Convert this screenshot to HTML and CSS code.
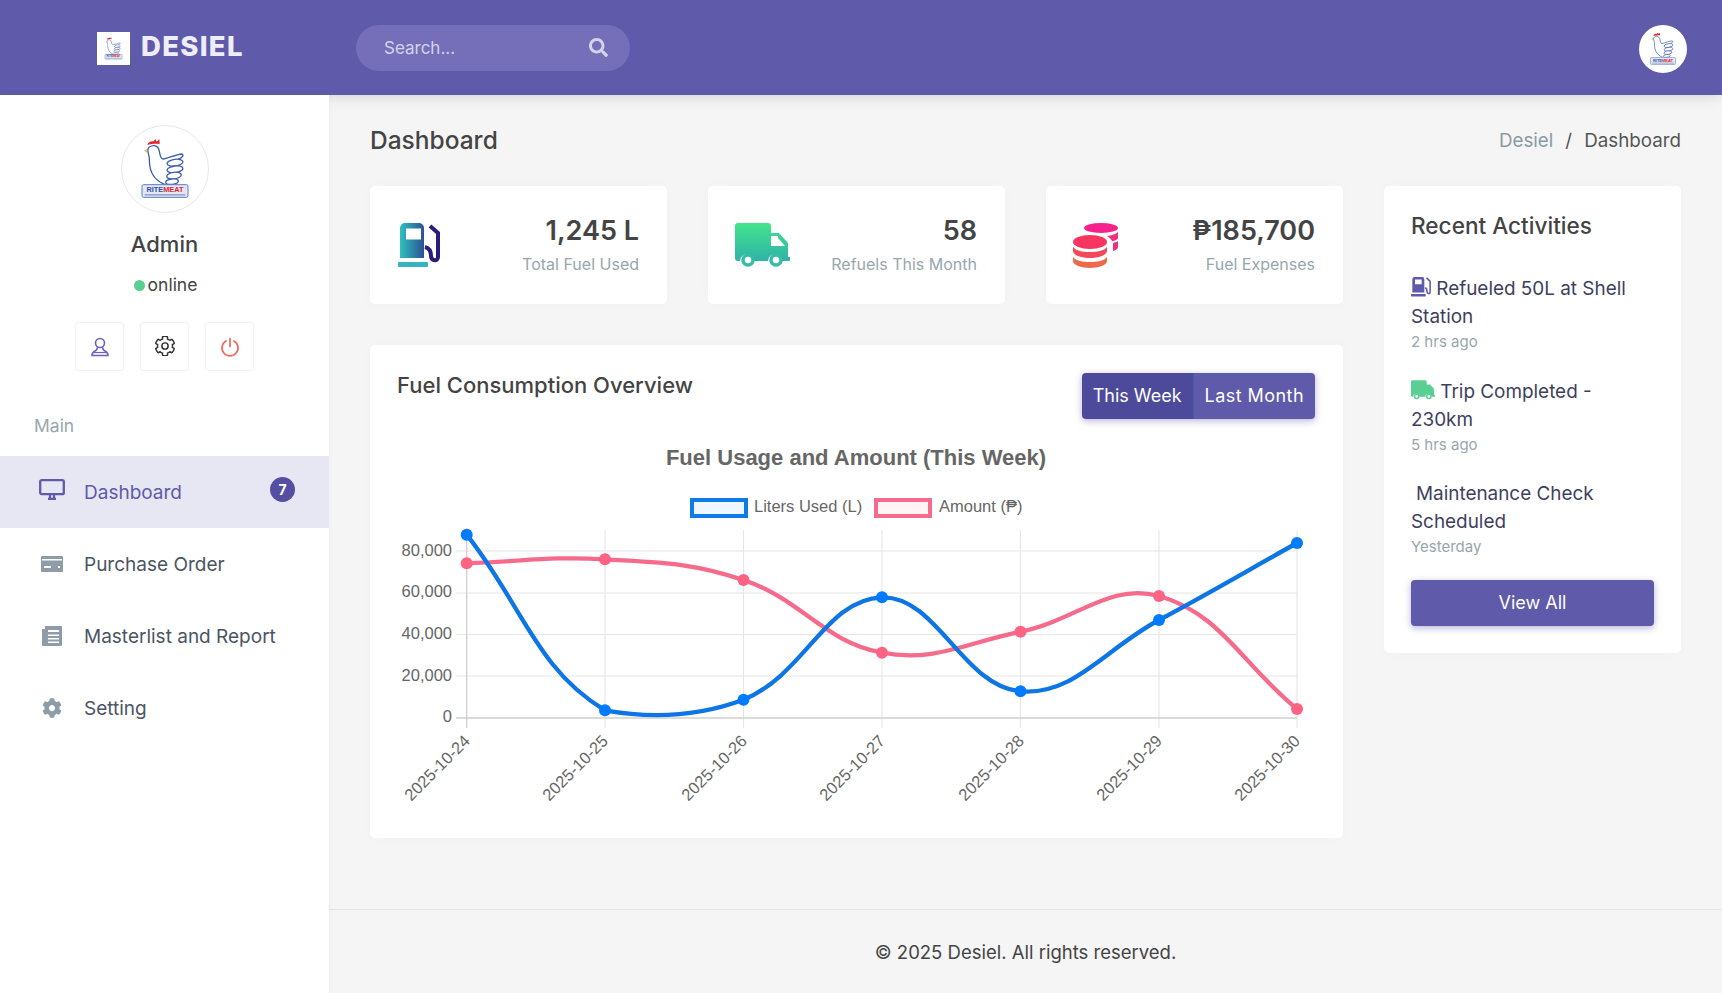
FILE: index.html
```html
<!DOCTYPE html>
<html lang="en">
<head>
    <meta charset="UTF-8">
    <title>Desiel - Dashboard</title>
    <link rel="stylesheet" href="styles.css">
</head>
<body>
    <!-- shared icons -->
    <svg class="defs" width="0" height="0">
        <defs>
            <linearGradient id="gradPump" x1="0" y1="0" x2="1.500" y2="0">
                <stop offset="0" stop-color="#2fc0bf"/>
                <stop offset="1" stop-color="#2c1a7c"/>
            </linearGradient>
            <linearGradient id="gradTruck" x1="0" y1="0" x2="0" y2="1">
                <stop offset="0" stop-color="#43e48c"/>
                <stop offset="1" stop-color="#2fb2a8"/>
            </linearGradient>
            <symbol id="ritemeat" viewBox="33 33 264 264">
                <path d="M112 93c3-10 12-13 19-11l5-7 4 8 8-8 1 15c-13-2-26 0-37 3z" fill="#e1262c"/>
                <path d="M110 104l-8 6 9 6z" fill="#f2b632"/>
                <path d="M118 99c-11 8 0 20 0 36 0 30 7 60 47 77M118 99c12-8 27-5 30 13 2 13 4 23 12 23 20-5 40-13 55-15 8 2 3 12-10 15" fill="none" stroke="#3f5fae" stroke-width="4"/>
                <g fill="#fff" stroke="#3f5fae" stroke-width="4">
                    <ellipse cx="195" cy="146" rx="24" ry="10" transform="rotate(-8 195 146)"/>
                    <ellipse cx="195" cy="166" rx="24" ry="10" transform="rotate(-8 195 166)"/>
                    <ellipse cx="192" cy="185" rx="22" ry="10" transform="rotate(-8 192 185)"/>
                    <ellipse cx="186" cy="203" rx="19" ry="8" transform="rotate(-8 186 203)"/>
                </g>
                <rect x="96" y="212" width="138" height="38" rx="5" fill="#e2e7f3" stroke="#5f7cc0" stroke-width="3"/>
                <text x="165" y="235" text-anchor="middle" class="logoText"><tspan fill="#2f4fa8">RITE</tspan><tspan fill="#e1262c">MEAT</tspan></text>
                <rect x="104" y="240" width="122" height="5" fill="#9aa8cc"/>
            </symbol>
            <symbol id="pump" viewBox="0 0 45 45">
                <path d="M3 5a5 5 0 0 1 5-5h14a5 5 0 0 1 5 5v30H3zM9 5.500v11h15v-11z" fill="url(#gradPump)" fill-rule="evenodd"/>
                <rect x="1" y="39" width="30" height="5" rx="1" fill="#35b4c0"/>
                <path d="M33 3l8 7v24c0 5-7 4-7-1 0-5-2-8-6-9" fill="none" stroke="#2c1a7c" stroke-width="4"/>
            </symbol>
            <symbol id="truck" viewBox="0 0 55 45">
                <path d="M3 0h30a3 3 0 0 1 3 3v7h8l9 10v14h2v4h-8a7 7 0 0 0-14 0H19a7 7 0 0 0-14 0H3a3 3 0 0 1-3-3V3a3 3 0 0 1 3-3zM36 13v10h14l-7-8v-2z" fill="url(#gradTruck)" fill-rule="evenodd"/>
                <circle cx="13" cy="37" r="5" fill="#fff" stroke="#35bea6" stroke-width="3.500"/>
                <circle cx="41" cy="37" r="5" fill="#fff" stroke="#35bea6" stroke-width="3.500"/>
            </symbol>
            <symbol id="coins" viewBox="0 0 45 45">
                <ellipse cx="28" cy="5" rx="17" ry="5" fill="#f7208d"/>
                <path d="M34 13c5-.5 9-2 11-4v6c0 1-3 3-6 3-1-2-3-4-5-5zM40 20c2-.5 4-1 5-2v6c0 2-2 3-5 4z" fill="#f02f80"/>
                <ellipse cx="17" cy="19" rx="17" ry="7" fill="#f7355f"/>
                <path d="M0 24c3 4 10 5 17 5s14-1 17-5v4c0 4-8 7-17 7S0 32 0 28z" fill="#f3495b"/>
                <path d="M0 34c3 4 10 5 17 5s14-1 17-5v4c0 4-8 7-17 7S0 42 0 38z" fill="#ee6b4a"/>
            </symbol>
            <symbol id="cog" viewBox="0 0 512 512">
                <path d="M487.4 315.7l-42.6-24.6c4.3-23.2 4.3-47 0-70.2l42.6-24.6c4.900-2.800 7.100-8.600 5.500-14-11.100-35.600-30-67.800-54.700-94.600-3.800-4.100-10-5.100-14.800-2.300L380.800 110c-17.900-15.400-38.500-27.300-60.800-35.100V25.800c0-5.600-3.900-10.500-9.400-11.700-36.700-8.200-74.300-7.800-109.200 0-5.500 1.200-9.400 6.100-9.400 11.700V75c-22.200 7.900-42.800 19.800-60.800 35.100L88.700 85.500c-4.900-2.800-11-1.900-14.800 2.300-24.700 26.700-43.600 58.900-54.700 94.600-1.700 5.400.6 11.200 5.500 14L67.300 221c-4.300 23.200-4.300 47 0 70.200l-42.600 24.600c-4.900 2.800-7.100 8.600-5.500 14 11.100 35.600 30 67.800 54.700 94.600 3.800 4.100 10 5.100 14.800 2.300l42.600-24.600c17.900 15.400 38.500 27.300 60.800 35.100v49.200c0 5.600 3.900 10.500 9.400 11.700 36.700 8.200 74.300 7.800 109.200 0 5.500-1.200 9.400-6.100 9.400-11.700v-49.200c22.200-7.900 42.800-19.800 60.800-35.100l42.600 24.600c4.900 2.800 11 1.900 14.800-2.300 24.700-26.700 43.600-58.900 54.700-94.600 1.500-5.500-.7-11.300-5.600-14.100zM256 336c-44.100 0-80-35.900-80-80s35.900-80 80-80 80 35.900 80 80-35.900 80-80 80z"/>
            </symbol>
        </defs>
    </svg>

    <header class="topbar">
        <div class="brand">
            <span class="brandLogo"><svg width="33" height="33"><use href="#ritemeat"/></svg></span>
            <span class="brandName">DESIEL</span>
        </div>
        <div class="search">
            <span>Search...</span>
            <svg width="19" height="19" viewBox="0 0 512 512"><path fill="currentColor" d="M505 442.700L405.300 343c-4.500-4.500-10.600-7-17-7H372c27.600-35.300 44-79.700 44-128C416 93.100 322.900 0 208 0S0 93.100 0 208s93.100 208 208 208c48.300 0 92.700-16.400 128-44v16.300c0 6.400 2.500 12.500 7 17l99.700 99.700c9.400 9.400 24.600 9.400 33.900 0l28.300-28.300c9.400-9.400 9.400-24.600.1-34zM208 336c-70.700 0-128-57.200-128-128 0-70.700 57.200-128 128-128 70.700 0 128 57.200 128 128 0 70.700-57.200 128-128 128z"/></svg>
        </div>
        <div class="topAvatar"><svg width="48" height="48"><use href="#ritemeat"/></svg></div>
    </header>

    <div class="layout">
        <aside class="sidebar">
            <div class="profile">
                <div class="avatar"><svg width="88" height="88"><use href="#ritemeat"/></svg></div>
                <div class="profileName">Admin</div>
                <div class="profileStatus"><i class="dot"></i>online</div>
                <div class="profileBtns">
                    <span class="squareBtn">
                        <svg width="20" height="20" viewBox="0 0 20 20" fill="none" stroke="#6f5cc4" stroke-width="1.600"><circle cx="10" cy="6" r="4.500"/><path d="M7 10.500c.5 1.500 0 2.500-2 3.500-2 1-3 2-3 4.500h16c0-2.500-1-3.500-3-4.500-2-1-2.500-2-2-3.500"/><path d="M3 15.500h14" stroke-width="1.200"/></svg>
                    </span>
                    <span class="squareBtn">
                        <svg class="cogLine" width="20" height="20"><use href="#cog"/></svg>
                    </span>
                    <span class="squareBtn">
                        <svg width="20" height="20" viewBox="0 0 20 20" fill="none" stroke="#ef6a5a" stroke-width="1.700" stroke-linecap="round"><path d="M10 1.500v8"/><path d="M6 4a8 8 0 1 0 8 0"/></svg>
                    </span>
                </div>
            </div>
            <div class="menuLabel">Main</div>
            <ul class="menu">
                <li class="menuItem active">
                    <span class="menuIcon">
                        <svg width="26" height="21" viewBox="0 0 26 21" fill="none" stroke="#5f5aaa" stroke-width="2.300"><rect x="1.200" y="1.200" width="23.600" height="14" rx="1.500"/><path d="M9 19.800h8M11 15v4.500M15 15v4.500"/></svg>
                    </span>
                    <span>Dashboard</span>
                    <span class="badge">7</span>
                </li>
                <li class="menuItem">
                    <span class="menuIcon">
                        <svg width="22" height="16" viewBox="0 0 22 16"><path fill="#8d9ca8" fill-rule="evenodd" d="M1 0h20a1 1 0 0 1 1 1v14a1 1 0 0 1-1 1H1a1 1 0 0 1-1-1V1a1 1 0 0 1 1-1zM1 3v1.500h20V3zM3 10v2h7v-2zM17 10v2h2v-2z"/></svg>
                    </span>
                    <span>Purchase Order</span>
                </li>
                <li class="menuItem">
                    <span class="menuIcon">
                        <svg width="20" height="20" viewBox="0 0 20 20"><path fill="#8d9ca8" fill-rule="evenodd" d="M3 0h16a1 1 0 0 1 1 1v18a1 1 0 0 1-1 1H1a1 1 0 0 1-1-1V3h3zM6 4v2h11V4zM6 8.500v1.500h11V8.500zM6 12v1.500h11V12zM6 15.500V17h11v-1.500z"/></svg>
                    </span>
                    <span>Masterlist and Report</span>
                </li>
                <li class="menuItem">
                    <span class="menuIcon">
                        <svg class="cogFill" width="20" height="20"><use href="#cog"/></svg>
                    </span>
                    <span>Setting</span>
                </li>
            </ul>
        </aside>

        <main class="main">
            <div class="content">
                <div class="pageHead">
                    <h1 class="pageTitle">Dashboard</h1>
                    <div class="crumbs"><span class="crumbRoot">Desiel</span><span class="crumbSep">/</span><span>Dashboard</span></div>
                </div>
                <div class="grid">
                    <div class="leftCol">
                        <div class="stats">
                            <div class="card statCard">
                                <svg width="45" height="45"><use href="#pump"/></svg>
                                <div class="statText">
                                    <div class="statValue">1,245 L</div>
                                    <div class="statLabel">Total Fuel Used</div>
                                </div>
                            </div>
                            <div class="card statCard">
                                <svg width="55" height="45"><use href="#truck"/></svg>
                                <div class="statText">
                                    <div class="statValue">58</div>
                                    <div class="statLabel">Refuels This Month</div>
                                </div>
                            </div>
                            <div class="card statCard">
                                <svg width="45" height="45"><use href="#coins"/></svg>
                                <div class="statText">
                                    <div class="statValue">₱185,700</div>
                                    <div class="statLabel">Fuel Expenses</div>
                                </div>
                            </div>
                        </div>
                        <div class="card chartCard">
                            <div class="chartHead">
                                <h2 class="cardTitle">Fuel Consumption Overview</h2>
                                <div class="btnGroup">
                                    <span class="groupBtn current">This Week</span>
                                    <span class="groupBtn wide">Last Month</span>
                                </div>
                            </div>
                            <svg id="chart" class="chart" width="918" height="379" viewBox="397 432 918 379">
                                <text class="chartTitle" x="856" y="465" text-anchor="middle">Fuel Usage and Amount (This Week)</text>
                                <rect x="692" y="500" width="54" height="16" fill="#eef6ff" stroke="#0d7ce8" stroke-width="4"/>
                                <text class="chartText" x="754" y="512">Liters Used (L)</text>
                                <rect x="876" y="500" width="54" height="16" fill="#fff3f6" stroke="#f66b8c" stroke-width="4"/>
                                <text class="chartText" x="939" y="512">Amount (₱)</text>

                                <g stroke="#e6e6e6" stroke-width="1.100">
                                    <path d="M456 551H1297M456 593H1297M456 634.500H1297M456 676H1297"/>
                                    <path d="M605 530V728M743.500 530V728M882 530V728M1020.500 530V728M1159 530V728M1297 530V728"/>
                                </g>
                                <path d="M456 718H1297M466.700 530V728" stroke="#cfcfcf" stroke-width="1.300" fill="none"/>

                                <g class="chartText" text-anchor="end">
                                    <text x="452" y="556">80,000</text>
                                    <text x="452" y="597">60,000</text>
                                    <text x="452" y="639">40,000</text>
                                    <text x="452" y="681">20,000</text>
                                    <text x="452" y="722">0</text>
                                    <text transform="translate(471 742) rotate(-45)">2025-10-24</text>
                                    <text transform="translate(609 742) rotate(-45)">2025-10-25</text>
                                    <text transform="translate(748 742) rotate(-45)">2025-10-26</text>
                                    <text transform="translate(886 742) rotate(-45)">2025-10-27</text>
                                    <text transform="translate(1025 742) rotate(-45)">2025-10-28</text>
                                    <text transform="translate(1163 742) rotate(-45)">2025-10-29</text>
                                    <text transform="translate(1301 742) rotate(-45)">2025-10-30</text>
                                </g>
                            </svg>
                        </div>
                    </div>
                    <div class="card recent">
                        <h2 class="cardTitle">Recent Activities</h2>
                        <div class="activity">
                            <div class="activityText"><svg class="inlineIcon" width="20" height="20" viewBox="0 0 45 45"><path d="M3 5a5 5 0 0 1 5-5h17a5 5 0 0 1 5 5v30H3zM9 5.500v11h15v-11z" fill="#5f5aaa" fill-rule="evenodd"/><rect x="0" y="38" width="33" height="6" rx="1" fill="#5f5aaa"/><path d="M35 2l8 8v24c0 5-7 4-7-1 0-5-1-8-4-9" fill="none" stroke="#5f5aaa" stroke-width="3.500"/></svg> Refueled 50L at Shell Station</div>
                            <div class="activityTime">2 hrs ago</div>
                        </div>
                        <div class="activity">
                            <div class="activityText"><svg class="inlineIcon" width="24" height="20" viewBox="0 0 55 45"><path d="M3 0h30a3 3 0 0 1 3 3v7h8l9 10v14h2v4h-8a7 7 0 0 0-14 0H19a7 7 0 0 0-14 0H3a3 3 0 0 1-3-3V3a3 3 0 0 1 3-3z" fill="#59cf93"/><circle cx="13" cy="37" r="5" fill="#fff" stroke="#59cf93" stroke-width="3.500"/><circle cx="41" cy="37" r="5" fill="#fff" stroke="#59cf93" stroke-width="3.500"/></svg> Trip Completed - 230km</div>
                            <div class="activityTime">5 hrs ago</div>
                        </div>
                        <div class="activity">
                            <div class="activityText"><span class="gap"></span>Maintenance Check Scheduled</div>
                            <div class="activityTime">Yesterday</div>
                        </div>
                        <div class="viewAll">View All</div>
                    </div>
                </div>
            </div>
            <footer class="footer">© 2025 Desiel. All rights reserved.</footer>
        </main>
    </div>
    <script src="chart.js"></script>
</body>
</html>
```

FILE: styles.css
```css
* {
    padding: 0;
    margin: 0;
    box-sizing: border-box;
}
html, body {
    height: 993px;
    overflow: hidden;
}
body {
    font-family: Inter, "Noto Sans", sans-serif;
    background-color: #f5f5f5;
    color: #444;
}
.defs {
    position: absolute;
}
.logoText {
    font-family: "Liberation Sans", sans-serif;
    font-weight: 700;
    font-size: 22px;
}

/* top bar */
.topbar {
    position: relative;
    display: flex;
    align-items: center;
    height: 95px;
    background-color: #5f5aaa;
    box-shadow: 0 2px 14px rgba(0, 0, 0, 0.12);
}
.brand {
    display: flex;
    align-items: center;
    width: 356px;
    padding-left: 97px;
    padding-bottom: 3px;
}
.brandLogo {
    display: flex;
    margin-top: 4px;
    background-color: #fff;
}
.brandName {
    margin-left: 11px;
    font-size: 27.500px;
    font-weight: 800;
    color: #eeeef9;
    letter-spacing: 1.300px;
}
.search {
    display: flex;
    align-items: center;
    justify-content: space-between;
    width: 274px;
    height: 46px;
    padding: 0 22px 0 28px;
    border-radius: 23px;
    background-color: #746fb8;
    color: #d5d3ec;
    font-size: 17px;
}
.topAvatar {
    width: 48px;
    height: 48px;
    margin-left: auto;
    margin-right: 35px;
    margin-top: 3px;
    border-radius: 50%;
    background-color: #fff;
    overflow: hidden;
}

/* page layout */
.layout {
    display: flex;
    height: 898px;
}
.sidebar {
    position: relative;
    z-index: 2;
    width: 329px;
    flex-shrink: 0;
    background-color: #fff;
    box-shadow: 0 0 6px rgba(0, 0, 0, 0.04);
}
.profile {
    display: flex;
    flex-direction: column;
    align-items: center;
    padding-top: 30px;
}
.avatar {
    width: 88px;
    height: 88px;
    border-radius: 50%;
    border: 1px solid #e8e8e8;
    overflow: hidden;
}
.avatar svg {
    display: block;
    margin: -1px;
}
.profileName {
    margin-top: 18px;
    font-size: 22px;
    font-weight: 500;
    line-height: 26px;
}
.profileStatus {
    display: flex;
    align-items: center;
    margin-top: 16px;
    margin-left: 2px;
    font-size: 17.500px;
    line-height: 24px;
}
.dot {
    width: 11px;
    height: 11px;
    margin-right: 3px;
    border-radius: 50%;
    background-color: #59cf93;
}
.profileBtns {
    display: flex;
    gap: 16px;
    margin-top: 25px;
}
.squareBtn {
    display: flex;
    align-items: center;
    justify-content: center;
    width: 49px;
    height: 49px;
    border: 1px solid #f3f3f3;
    border-radius: 4px;
    box-shadow: 0 0 3px rgba(0, 0, 0, 0.04);
}
.cogLine {
    margin-top: -2px;
    fill: none;
    stroke: #333;
    stroke-width: 38px;
    overflow: visible;
}
.cogFill {
    fill: #8d9ca8;
}
.menuLabel {
    margin: 43px 0 18px 34px;
    font-size: 17.500px;
    line-height: 24px;
    color: #98a6ad;
}
.menu {
    list-style: none;
}
.menuItem {
    display: flex;
    align-items: center;
    height: 72px;
    padding: 0 34px 0 36px;
    font-size: 19px;
    color: #4b5563;
}
.menuItem.active {
    background-color: #e7e7f3;
    color: #5f5aaa;
}
.menuIcon {
    display: flex;
    align-items: center;
    justify-content: center;
    width: 32px;
    margin-right: 16px;
}
.menuItem.active .menuIcon {
    margin-top: -6px;
}
.badge {
    display: flex;
    align-items: center;
    justify-content: center;
    width: 25px;
    height: 25px;
    margin-left: auto;
    margin-top: -6px;
    border-radius: 50%;
    background-color: #544fa3;
    color: #fff;
    font-size: 14px;
    font-weight: 700;
}

/* main column */
.main {
    flex: 1;
    display: flex;
    flex-direction: column;
}
.content {
    flex: 1;
    padding: 29px 41px 0 41px;
}
.pageHead {
    display: flex;
    align-items: center;
    justify-content: space-between;
    height: 32px;
    margin-bottom: 30px;
}
.pageTitle {
    font-size: 24.500px;
    font-weight: 500;
}
.crumbs {
    display: flex;
    gap: 12px;
    font-size: 18.800px;
    color: #555;
}
.crumbRoot {
    color: #8b9aa3;
}
.grid {
    display: grid;
    grid-template-columns: 973px 297px;
    gap: 41px;
    align-items: start;
}
.card {
    background-color: #fff;
    border-radius: 5px;
    box-shadow: 0 0 12px rgba(0, 0, 0, 0.02);
}
.stats {
    display: grid;
    grid-template-columns: repeat(3, 1fr);
    gap: 41px;
    margin-bottom: 41px;
}
.statCard {
    display: flex;
    align-items: center;
    justify-content: space-between;
    height: 118px;
    padding: 0 28px 0 27px;
}
.statText {
    text-align: right;
}
.statValue {
    margin-top: -3px;
    font-size: 27px;
    font-weight: 600;
    line-height: 36px;
}
.statLabel {
    margin-top: 5px;
    font-size: 16px;
    line-height: 20px;
    color: #98a6ad;
}
.chartCard {
    height: 493px;
    padding: 27px 28px 27px 27px;
}
.chartHead {
    display: flex;
    justify-content: space-between;
    align-items: flex-start;
    height: 60px;
}
.cardTitle {
    font-size: 22px;
    font-weight: 500;
    line-height: 26px;
}
.btnGroup {
    display: flex;
    margin-top: 1px;
    border-radius: 4px;
    overflow: hidden;
    box-shadow: 0 2px 7px rgba(95, 90, 170, 0.45);
}
.groupBtn {
    height: 46px;
    padding: 0 11px;
    background-color: #5f5aaa;
    color: #fff;
    font-size: 18px;
    line-height: 46px;
}
.groupBtn.current {
    background-color: #4e4a9b;
    border-right: 1px solid #4658a8;
}
.groupBtn.wide {
    letter-spacing: 0.450px;
}
.chart {
    display: block;
}
.chartTitle {
    font-family: "Liberation Sans", sans-serif;
    font-size: 22px;
    font-weight: 700;
    fill: #666;
}
.chartText {
    font-family: "Liberation Sans", "DejaVu Sans", sans-serif;
    font-size: 16.500px;
    fill: #666;
}
.recent {
    height: 467px;
    padding: 27px 27px 0;
}
.activity {
    margin-bottom: 24.500px;
}
.activity:nth-last-child(2) {
    margin-bottom: 21.500px;
}
.recent .cardTitle {
    margin-bottom: 36px;
    font-size: 22.600px;
}
.activityText {
    font-size: 18.900px;
    line-height: 28px;
    color: #3e3f5e;
}
.inlineIcon {
    vertical-align: -2px;
}
.gap {
    display: inline-block;
    width: 5px;
}
.activityTime {
    font-size: 15px;
    line-height: 22px;
    color: #98a6ad;
}
.viewAll {
    height: 46px;
    border-radius: 4px;
    background-color: #5f5aaa;
    box-shadow: 0 2px 7px rgba(95, 90, 170, 0.45);
    color: #fff;
    font-size: 18px;
    line-height: 46px;
    text-align: center;
}
.footer {
    height: 84px;
    border-top: 1px solid #e5e5e5;
    font-size: 18.500px;
    line-height: 84px;
    text-align: center;
    color: #444;
}
```

FILE: chart.js
```js
// pixel positions of the two data sets inside the chart svg
var xs = [466.7, 605, 743.5, 882, 1020.5, 1159, 1297];
var pink = [563.3, 559.3, 580, 652.7, 631.7, 596, 709];
var blue = [534.7, 710.3, 699.7, 597.3, 691.3, 620, 543];
var plotBottom = 718;
var svgNs = 'http://www.w3.org/2000/svg';

// same spline the chart libs use, tension 0.4, control points kept inside the plot
function curve(ys) {
    var pts = xs.map(function (x, i) { return [x, ys[i]]; });
    var cps = pts.map(function (p, i) {
        var a = pts[i - 1] || p;
        var b = pts[i + 1] || p;
        var d1 = Math.hypot(p[0] - a[0], p[1] - a[1]);
        var d2 = Math.hypot(b[0] - p[0], b[1] - p[1]);
        var f1 = 0.4 * d1 / (d1 + d2);
        var f2 = 0.4 * d2 / (d1 + d2);
        return {
            prev: [p[0] - f1 * (b[0] - a[0]), Math.min(p[1] - f1 * (b[1] - a[1]), plotBottom)],
            next: [p[0] + f2 * (b[0] - a[0]), Math.min(p[1] + f2 * (b[1] - a[1]), plotBottom)]
        };
    });
    var d = 'M' + pts[0].join(' ');
    for (var i = 1; i < pts.length; i++) {
        d += 'C' + cps[i - 1].next.join(' ') + ' ' + cps[i].prev.join(' ') + ' ' + pts[i].join(' ');
    }
    return d;
}

function drawSet(ys, lineColor, dotColor) {
    var svg = document.getElementById('chart');
    var path = document.createElementNS(svgNs, 'path');
    path.setAttribute('d', curve(ys));
    path.setAttribute('fill', 'none');
    path.setAttribute('stroke', lineColor);
    path.setAttribute('stroke-width', '4.3');
    svg.appendChild(path);
    ys.forEach(function (y, i) {
        var dot = document.createElementNS(svgNs, 'circle');
        dot.setAttribute('cx', xs[i]);
        dot.setAttribute('cy', y);
        dot.setAttribute('r', '6');
        dot.setAttribute('fill', dotColor);
        svg.appendChild(dot);
    });
}

drawSet(pink, '#f66b8c', '#ff6384');
drawSet(blue, '#0d76e4', '#007bff');
```
